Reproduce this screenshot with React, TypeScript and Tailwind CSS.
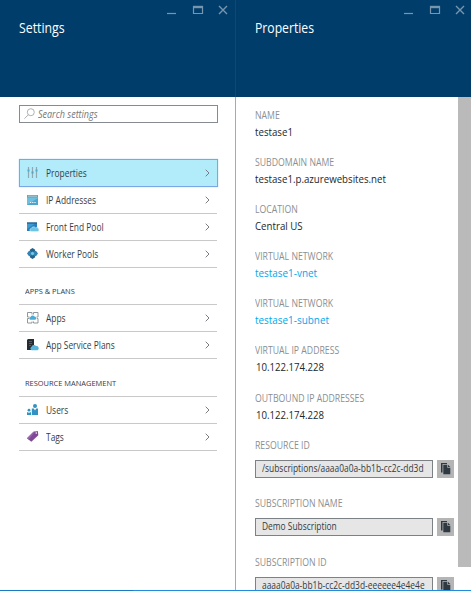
import type { ReactNode } from "react";

function WindowButtons() {
  return (
    <svg width="64" height="12" viewBox="0 0 64 12" fill="none" stroke="#7895ae">
      <path d="M1 8.500h9" strokeWidth="1.2" />
      <path d="M27.5 1.5h9v7h-9z" strokeWidth="1.2" />
      <path d="M27 2h10" strokeWidth="2.4" />
      <path d="M53 1l8 8M61 1l-8 8" strokeWidth="1.4" />
    </svg>
  );
}

function Sliders() {
  return (
    <svg width="12" height="12" viewBox="0 0 12 12">
      <path d="M1.5 0v11M5.5 0v11M9.5 0v11" stroke="#8fa9b4" strokeWidth="1.2" />
      <path d="M.5 3.5h2M8.500 3.5h2" stroke="#4caed0" strokeWidth="2" />
      <path d="M4.500 5.5h2" stroke="#5d9ebc" strokeWidth="2" />
    </svg>
  );
}

function AddressIcon() {
  return (
    <svg width="12" height="12" viewBox="0 0 12 12">
      <path d="M0 1h11v10H0z" fill="#6cc0e0" />
      <path d="M0 1h11v2.5H0z" fill="#7e99a8" />
      <path d="M1 2.200h9" stroke="#a9d9ea" strokeWidth=".8" />
      <path d="M11 4v7H0z" fill="#4ca6cf" />
      <path d="M3 8.5h1.2M5.2 8.5h1.2M7.4 8.5h1.2" stroke="#fff" strokeWidth="1.2" />
    </svg>
  );
}

function FrontEndIcon() {
  return (
    <svg width="12" height="12" viewBox="0 0 12 12">
      <path d="M0 1.5h10v8.500H0z" fill="#2680bd" />
      <path d="M0 1.5h10v1.3H0z" fill="#315d7c" />
      <path d="M0 2.8h8L0 8z" fill="#3c9bd2" />
      <path d="M4 10.600a1.700 1.700 0 0 1 .3-3.300 2.400 2.400 0 0 1 4.200-.5 2.100 2.100 0 0 1 2.300 3.800z" fill="#6cc3e4" stroke="#fff" strokeWidth=".4" />
    </svg>
  );
}

function WorkerIcon() {
  return (
    <svg width="12" height="12" viewBox="0 0 12 12">
      <path d="M5.500 0L8.200 1.800 7.800 4 5.500 5 3.200 4 2.800 1.800zM5.500 6L7.800 7 8.200 9.200 5.500 11 2.800 9.200 3.200 7z" fill="#25638d" />
      <path d="M2 2.800L4.200 3.300 5 5.500 4.200 7.700 2 8.200 0 5.500zM9 2.800L11 5.500 9 8.200 6.800 7.700 6 5.500 6.800 3.300z" fill="#3283af" />
      <path d="M5.500 3.600l1.900 1.900-1.900 1.900-1.900-1.900z" fill="#70c8e8" />
    </svg>
  );
}

function AppsIcon() {
  return (
    <svg width="12" height="12" viewBox="0 0 12 12">
      <path d="M5 2.500V.5H.5V5H2.500M6.500 2.500V.5H11V5H9.500M.5 6.500V11H5V9.500M.5 6.500H2M11 6.500V11H6.500V9.500M11 6.500H9.800" fill="none" stroke="#858c91" strokeWidth=".9" />
      <path d="M3.300 7.800a1.500 1.500 0 0 1 .2-2.900 2.200 2.200 0 0 1 4-.4 1.800 1.800 0 0 1 .9 3.300z" fill="#48acd5" />
    </svg>
  );
}

function PlansIcon() {
  return (
    <svg width="12" height="12" viewBox="0 0 12 12">
      <path d="M0 1l1-1h6v11H0z" fill="#252b31" />
      <path d="M2 2.500h3M2 4.500h3M2 6.500h2" stroke="#66717a" strokeWidth=".7" />
      <path d="M4.500 11.200a1.900 1.900 0 0 1 0-3.500 2.500 2.500 0 0 1 4.500-.6 2.200 2.200 0 0 1 1.500 4.100z" fill="#59b4d9" />
    </svg>
  );
}

function UsersIcon() {
  return (
    <svg width="12" height="12" viewBox="0 0 12 12" fill="#3192c4">
      <circle cx="8" cy="2" r="2" />
      <path d="M4.800 4.500h2L8 6.500l1.200-2H11V11H4.800z" />
      <circle cx="2" cy="6.200" r="1.400" />
      <path d="M0 8.200h1.200l.8 1 .8-1H4V11H0z" />
    </svg>
  );
}

function TagIcon() {
  return (
    <svg width="12" height="12" viewBox="0 0 12 12">
      <path d="M0 7.200L6.500.7 10.800 0l.5 4.200-7 6.600z" fill="#804998" />
      <path d="M0 7.200L6.500.7l1.500-.2-6.500 8.200z" fill="#9868ad" />
      <circle cx="9.300" cy="2" r=".8" fill="#fff" />
    </svg>
  );
}

function CopyIcon() {
  return (
    <svg width="10" height="12" viewBox="0 0 10 12" fill="#2e3942">
      <path d="M0 0h6v1H1.500v8.500H0z" />
      <path d="M2.300 1.800h4v3h3v6.500h-7z" />
      <path d="M7 1.800l2.300 2.300H7z" />
    </svg>
  );
}

function Chevron() {
  return (
    <svg width="5" height="8" viewBox="0 0 5 8" fill="none" stroke="#777d82">
      <path d="M.7.700L4 4 .7 7.300" />
    </svg>
  );
}

function Row({ icon, label, active = false }: { icon: ReactNode; label: string; active?: boolean }) {
  return (
    <div
      className={
        active
          ? "flex h-7 w-[199px] items-center border border-[#7ba7e8] bg-[#b2ebf9] pl-[7px] pr-[7px] shadow-[0_0_1px_#8fc4f5]"
          : "flex h-[27px] items-center border-b border-[#c9c9c9] pl-2 pr-[7px]"
      }
    >
      <span className="w-[19px]">{icon}</span>
      <span className="flex-1 origin-left scale-x-[.84] text-[10px] leading-4 text-[#343e48]">{label}</span>
      <Chevron />
    </div>
  );
}

function Label({ children }: { children: string }) {
  return <div className="origin-left scale-x-[.87] whitespace-nowrap text-[10px] leading-[14px] text-[#8a8f93]">{children}</div>;
}

function Field({ label, value, kind = "text" }: { label: string; value: string; kind?: "text" | "link" | "ip" }) {
  const tone =
    kind === "link"
      ? "scale-x-[.9] text-[#00a8ec]"
      : kind === "ip"
        ? "scale-x-[.875] pl-px text-[#20282f]"
        : "scale-x-[.88] text-[#20282f]";
  return (
    <div className="h-[47.2px]">
      <Label>{label}</Label>
      <div className={`mt-[2px] origin-left whitespace-nowrap text-[11px] leading-4 ${tone}`}>{value}</div>
    </div>
  );
}

function CopyField({ label, value }: { label: string; value: string }) {
  return (
    <div className="h-[58.5px]">
      <Label>{label}</Label>
      <div className="mt-2 flex gap-1">
        <div className="h-[18px] w-[178px] whitespace-nowrap border border-[#7c8186] bg-[#e6e6e6] pl-[6px]">
          <span className="block w-max origin-left scale-x-[.84] text-[10px] leading-[15px] text-[#323b44]">{value}</span>
        </div>
        <div className="flex h-[18px] w-[17px] items-center justify-center bg-[#b5b5b5]">
          <CopyIcon />
        </div>
      </div>
    </div>
  );
}

export default function App() {
  return (
    <div className="flex h-[591px] w-[471px] flex-col overflow-hidden bg-white font-['Open_Sans','Noto_Sans',sans-serif]">
      <div className="flex h-[590px] overflow-hidden">
        <section className="w-[236px] border-r border-[#a9a9a9]">
          <header className="-mr-px h-[97px] border-r border-[#074a7f] bg-[#003d6b] pt-1">
            <div className="flex h-3 justify-end pr-[5px] pt-px"><WindowButtons /></div>
            <h1 className="ml-[19px] mt-[2px] w-max origin-left scale-x-[.88] text-[14px] leading-5 text-white">Settings</h1>
          </header>
          <div className="pl-[19px] pr-[18px] pt-2">
            <div className="flex h-[18px] w-[199px] items-center border border-[#858b90] pl-1">
              <svg width="11" height="12" viewBox="0 0 11 12" fill="none" stroke="#a4a9ad" strokeWidth=".9">
                <circle cx="6.800" cy="4.200" r="3.500" />
                <path d="M4.300 6.800L.4 10.700" />
              </svg>
              <span className="ml-[3px] origin-left scale-x-[.9] text-[10px] italic leading-4 text-[#73797e]">Search settings</span>
            </div>
            <div className="pt-9">
              <Row icon={<Sliders />} label="Properties" active />
              <Row icon={<AddressIcon />} label="IP Addresses" />
              <Row icon={<FrontEndIcon />} label="Front End Pool" />
              <Row icon={<WorkerIcon />} label="Worker Pools" />
            </div>
            <div className="h-[37px] border-b border-[#c9c9c9] pl-[6px] pt-[15px]">
              <h2 className="w-max origin-left scale-x-[.93] text-[8px] leading-4 text-[#303b49]">APPS &amp; PLANS</h2>
            </div>
            <Row icon={<AppsIcon />} label="Apps" />
            <Row icon={<PlansIcon />} label="App Service Plans" />
            <div className="h-[38px] border-b border-[#c9c9c9] pl-[6px] pt-4">
              <h2 className="w-max origin-left scale-x-[.93] text-[8px] leading-4 text-[#303b49]">RESOURCE MANAGEMENT</h2>
            </div>
            <Row icon={<UsersIcon />} label="Users" />
            <Row icon={<TagIcon />} label="Tags" />
          </div>
        </section>
        <section className="flex-1">
          <header className="h-[97px] bg-[#003d6b] pt-1">
            <div className="flex h-3 justify-end pr-[4px] pt-px"><WindowButtons /></div>
            <h1 className="ml-[19px] mt-[2px] w-max origin-left scale-x-[.87] text-[14px] leading-5 text-white">Properties</h1>
          </header>
          <div className="flex">
            <div className="flex-1 pl-[19px] pt-[10.500px]">
              <Field label="NAME" value="testase1" />
              <Field label="SUBDOMAIN NAME" value="testase1.p.azurewebsites.net" />
              <Field label="LOCATION" value="Central US" />
              <Field label="VIRTUAL NETWORK" value="testase1-vnet" kind="link" />
              <Field label="VIRTUAL NETWORK" value="testase1-subnet" kind="link" />
              <Field label="VIRTUAL IP ADDRESS" value="10.122.174.228" kind="ip" />
              <Field label="OUTBOUND IP ADDRESSES" value="10.122.174.228" kind="ip" />
              <CopyField label="RESOURCE ID" value="/subscriptions/aaaa0a0a-bb1b-cc2c-dd3d" />
              <CopyField label="SUBSCRIPTION NAME" value="Demo Subscription" />
              <CopyField label="SUBSCRIPTION ID" value="aaaa0a0a-bb1b-cc2c-dd3d-eeeeee4e4e4e" />
            </div>
            <div className="h-[470px] w-[13px] bg-[#bababa]" />
          </div>
        </section>
      </div>
      <div className="flex h-px">
        <div className="w-[133px] bg-[#197ac4]" />
        <div className="flex-1 bg-[#218bdc]" />
      </div>
    </div>
  );
}
